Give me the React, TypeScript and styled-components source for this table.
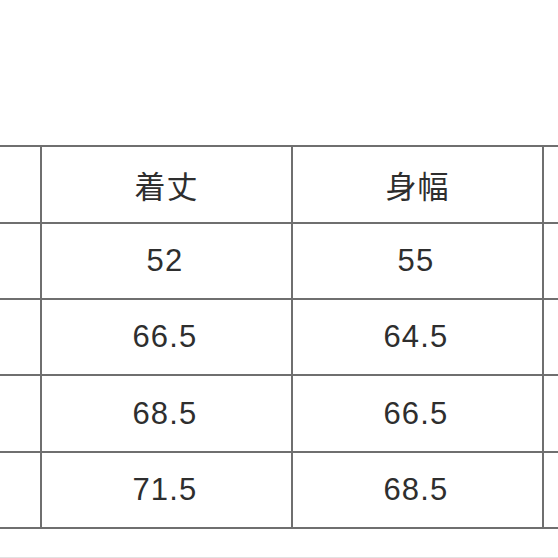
import React from "react";
import styled, { createGlobalStyle } from "styled-components";

const GlobalStyle = createGlobalStyle`
  html, body {
    margin: 0;
    padding: 0;
    background: #ffffff;
  }
  body {
    font-family: "Liberation Sans", "Noto Sans CJK JP", sans-serif;
    color: #2b2b2b;
  }
`;

const Page = styled.div`
  width: 558px;
  height: 558px;
  overflow: hidden;
  padding-top: 145px;
  box-sizing: border-box;
  display: flex;
  flex-direction: column;
`;

const Table = styled.div`
  display: grid;
  grid-template-columns: 42px 251px 251px 1fr;
  grid-template-rows: 77px 76px 76px 77px 76px;
  border-top: 2px solid #6f6f6f;
`;

const Cell = styled.div<{ $last?: boolean; $head?: boolean }>`
  display: flex;
  align-items: center;
  justify-content: center;
  box-sizing: border-box;
  padding-right: ${(p) => (p.$head ? "0" : "3px")};
  border-bottom: 2px solid #6f6f6f;
  border-right: ${(p) => (p.$last ? "none" : "2px solid #6f6f6f")};
  font-family: ${(p) =>
    p.$head
      ? '"Noto Sans CJK JP", "Liberation Sans", sans-serif'
      : '"Liberation Sans", "Noto Sans CJK JP", sans-serif'};
  font-size: 31px;
  letter-spacing: ${(p) => (p.$head ? "1px" : "1.2px")};
  font-weight: 400;
  color: #2e2e2e;
`;

const Footer = styled.div`
  margin-top: 28px;
  border-top: 1px solid #e2e2e2;
`;

const header = ["", "着丈", "身幅", ""];
const rows = [
  ["", "52", "55", ""],
  ["", "66.5", "64.5", ""],
  ["", "68.5", "66.5", ""],
  ["", "71.5", "68.5", ""],
];

export default function App() {
  return (
    <>
      <GlobalStyle />
      <Page>
        <Table>
          {header.map((h, i) => (
            <Cell key={`h${i}`} $head $last={i === 3}>
              {h}
            </Cell>
          ))}
          {rows.map((r, ri) =>
            r.map((v, ci) => (
              <Cell key={`${ri}-${ci}`} $last={ci === 3}>
                {v}
              </Cell>
            ))
          )}
        </Table>
        <Footer />
      </Page>
    </>
  );
}
